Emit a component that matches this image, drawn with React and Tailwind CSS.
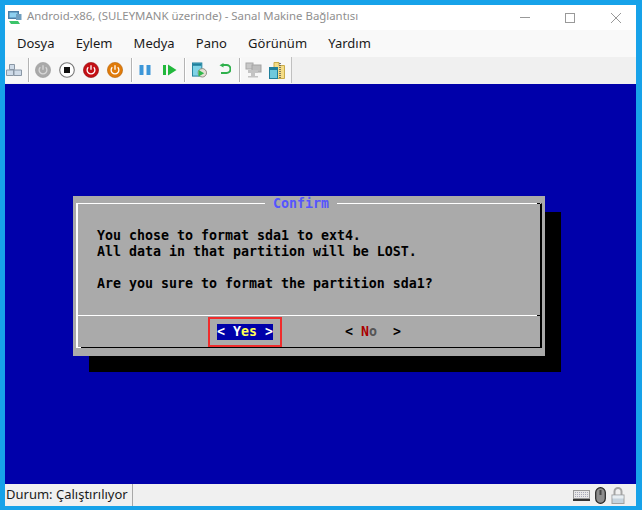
const Sep = () => <div className="w-px h-[24px] bg-[#b4b4b4] border-r border-white box-content" />;

function Power({ fill, ring, glyph = "#fff" }) {
  return (
    <svg width="16" height="16" viewBox="0 0 16 16">
      <circle cx="8" cy="8" r="7.6" fill={fill} stroke={ring} strokeWidth="0.6" />
      <path d="M5.3 5.2a3.9 3.9 0 1 0 5.4 0" fill="none" stroke={glyph} strokeWidth="1.3" />
      <path d="M8 3.2v4.6" stroke={glyph} strokeWidth="1.3" />
    </svg>
  );
}

function VmGreenBox() {
  return (
    <svg width="15" height="18" viewBox="0 0 16 18">
      <rect x="0.5" y="1.5" width="10" height="14" fill="#7fd3e6" stroke="#1f7f9c" />
      <rect x="1" y="2" width="9" height="2.5" fill="#1f7f9c" />
      <circle cx="11" cy="12" r="4.5" fill="#e4e0d4" stroke="#8a8a80" />
      <path d="M7 9l6 3.5-6 3.5z" fill="#2fb84a" />
    </svg>
  );
}

export default function App() {
  return (
    <div className="w-[642px] h-[510px] bg-[#17a2e9] pt-[5px] pl-[5px] pr-[6px] pb-[4px] flex flex-col overflow-hidden font-['Liberation_Sans',sans-serif]">
      {/* title bar */}
      <div className="h-[25px] bg-white flex items-center shrink-0">
        <svg className="ml-[2px] mr-[5px]" width="15" height="16" viewBox="0 0 15 16">
          <rect x="1" y="1" width="11" height="8" fill="#4a7fa8" />
          <rect x="2.5" y="2.5" width="8" height="5" fill="#8ed0f0" />
          <path d="M9 4h5.5v6H9z" fill="#6f9fc0" />
          <path d="M2 11l9 0 2 3H4z" fill="#3cc46a" />
        </svg>
        <span className="text-[11.4px] text-[#8f8f8f] font-['Noto_Sans',sans-serif] leading-none pb-[4px]">Android-x86, (SULEYMANK üzerinde) - Sanal Makine Bağlantısı</span>
        <div className="ml-auto flex items-center gap-[35px] pr-[15px]">
          <div className="w-[10px] h-px bg-[#999]" />
          <div className="w-[10px] h-[10px] border border-[#999]" />
          <svg width="10" height="10" viewBox="0 0 10 10" className="ml-px"><path d="M0 0l10 10M10 0L0 10" stroke="#999" strokeWidth="1" /></svg>
        </div>
      </div>
      {/* menu */}
      <div className="h-[27px] bg-[#f9f9f9] flex items-center pl-[12px] pt-px gap-[21.2px] text-[13px] text-[#1a1a1a] font-['Noto_Sans',sans-serif] shrink-0">
        <span>Dosya</span>
        <span>Eylem</span>
        <span>Medya</span>
        <span>Pano</span>
        <span>Görünüm</span>
        <span>Yardım</span>
      </div>
      {/* toolbar */}
      <div className="h-[27px] bg-[#f0f0f0] flex shrink-0">
        <div className="w-[287px] h-[26px] bg-[#f7f7f7] border-r border-[#c0c0c0] flex items-center">
          <svg width="16" height="12" viewBox="0 0 16 12" className="ml-px mr-[6px]">
            <path d="M3.5.5h5v5h-5zM.5 6h7v5.500h-7zM8 6h7.500v5.500H8z" fill="#cfdbe8" stroke="#8a97a5" />
          </svg>
          <Sep />
          <div className="flex items-center gap-[8px] ml-[5px]">
            <Power fill="#a9a9a9" ring="#9a9a9a" glyph="#d8d8d8" />
            <svg width="16" height="16" viewBox="0 0 16 16"><circle cx="8" cy="8" r="7.300" fill="#fff" stroke="#777" strokeWidth="1.100" /><rect x="5" y="5" width="6" height="6" fill="#111" /></svg>
            <Power fill="#c40f15" ring="#8f0a0a" />
            <Power fill="#e07b0a" ring="#b56205" />
          </div>
          <div className="ml-[8px]"><Sep /></div>
          <svg width="12" height="12" viewBox="0 0 12 12" className="ml-[6px]"><path d="M0.500 1h4v10h-4zM7.500 1h4v10h-4z" fill="#3c96d8" /></svg>
          <svg width="14" height="12" viewBox="0 0 14 12" className="ml-[12px]"><path d="M0 1h3v10H0zM5 0.500l8.500 5.500L5 11.500z" fill="#22b83c" /></svg>
          <div className="ml-[7px]"><Sep /></div>
          <div className="ml-[6px]"><VmGreenBox /></div>
          <svg width="13" height="14" viewBox="0 0 13 14" className="ml-[11px]">
            <path d="M5 2h3.500a3.800 3.800 0 0 1 0 8H3" fill="none" stroke="#2fb14c" strokeWidth="2" />
            <path d="M5.500 0v4.500L1.500 2.200z" fill="#2fb14c" />
          </svg>
          <div className="ml-[8px]"><Sep /></div>
          <svg width="17" height="16" viewBox="0 0 17 16" className="ml-[4px]">
            <rect x="1" y="1" width="7" height="6" fill="#c8c8c8" stroke="#a8a8a8" />
            <rect x="7" y="3" width="9" height="7" fill="#bdbdbd" stroke="#a4a4a4" />
            <path d="M3 8h10v3H3zM6 11h4v3H6zM3 14h10v1.500H3z" fill="#c4c4c4" />
          </svg>
          <svg width="16" height="17" viewBox="0 0 16 17" className="ml-[7px]">
            <path d="M5 .5h5v3h5.500v13H5z" fill="#f4dc86" stroke="#c9ab4a" />
            <rect x="0.500" y="5.500" width="8" height="11" fill="#6fc9dc" stroke="#1f7f9c" />
            <rect x="1" y="6" width="7" height="2" fill="#1f7f9c" />
            <path d="M11 1v15" stroke="#555" strokeWidth="1.500" strokeDasharray="1 1" />
          </svg>
        </div>
      </div>
      {/* console */}
      <div className="flex-1 bg-[#0000aa] pl-[68px] pt-[112px] font-['DejaVu_Sans_Mono',monospace] font-bold text-[13.29px] leading-[16px] text-black">
        <div className="w-[472px] h-[160px] bg-[#aaaaaa] shadow-[16px_16px_0_#000] pl-[3px] pr-[3px] pt-[7px] pb-[8px]">
          <div className="relative h-full flex flex-col border-l-2 border-t border-l-white border-t-white border-r-2 border-b border-r-black border-b-black">
            <div className="absolute -top-px right-0 w-[3px] h-px bg-black" />
            <div className="absolute -bottom-px -left-[2px] w-[5px] h-px bg-white" />
            <div className="absolute -top-[8px] left-[187px] w-[72px] h-[16px] bg-[#aaaaaa] text-center text-[#5555ff]">Confirm</div>
            <div className="absolute top-[111px] right-0 w-[3px] h-px bg-black" />
            <div className="h-[112px] shrink-0 pl-[19px] pt-[24px] border-b border-white whitespace-pre">
              <div>You chose to format sda1 to ext4.</div>
              <div>All data in that partition will be LOST.</div>
              <div>&nbsp;</div>
              <div>Are you sure to format the partition sda1?</div>
            </div>
            <div className="flex items-start pl-[139px] pt-[8px] whitespace-pre">
              <div className="relative w-[56px] h-[16px] bg-[#0000aa] text-white">
                <span>{"< "}</span><span>Y</span><span className="text-[#ffff55]">es</span><span>{" >"}</span>
                <div className="absolute -left-[9px] -top-[7px] w-[74px] h-[30px] border-2 border-[#f02c2c]" />
              </div>
              <div className="ml-[72px]">
                <span>{"< "}</span><span className="text-[#aa0000]">N</span><span className="text-[#555555]">o</span><span>{"  >"}</span>
              </div>
            </div>
          </div>
        </div>
      </div>
      {/* status */}
      <div className="h-[22px] bg-[#f0f0f0] flex items-center shrink-0 text-[13px] text-[#1a1a1a] font-['Noto_Sans',sans-serif]">
        <div className="w-[128px] h-full flex items-center pl-px border-r border-[#a8a8a8]">Durum: Çalıştırılıyor</div>
        <div className="ml-auto flex items-center gap-[5px] pr-[11px]">
          <svg width="17" height="11" viewBox="0 0 17 11"><rect x="0.500" y="0.500" width="16" height="8" fill="#e8e8e8" stroke="#9a9a9a" /><path d="M2 2.500h13M2 4.500h13M2 6.500h13" stroke="#aab" strokeDasharray="1 1" /><rect x="0" y="9" width="17" height="2" fill="#333" /></svg>
          <svg width="11" height="17" viewBox="0 0 11 17"><rect x="0.700" y="0.700" width="9.600" height="15.600" rx="4.800" fill="#8c8c8c" stroke="#222" strokeWidth="1.200" /><rect x="4.500" y="3" width="2" height="5" fill="#444" /></svg>
          <svg width="14" height="17" viewBox="0 0 14 17"><path d="M3.500 8V4.500a3.500 3.500 0 0 1 7 0V8" fill="none" stroke="#a5a5a5" strokeWidth="2" /><rect x="1" y="8" width="12" height="8.500" fill="#c6d3dd" stroke="#a0a0a0" /><rect x="1.500" y="8.500" width="11" height="3" fill="#e8eef2" /></svg>
        </div>
      </div>
    </div>
  );
}
